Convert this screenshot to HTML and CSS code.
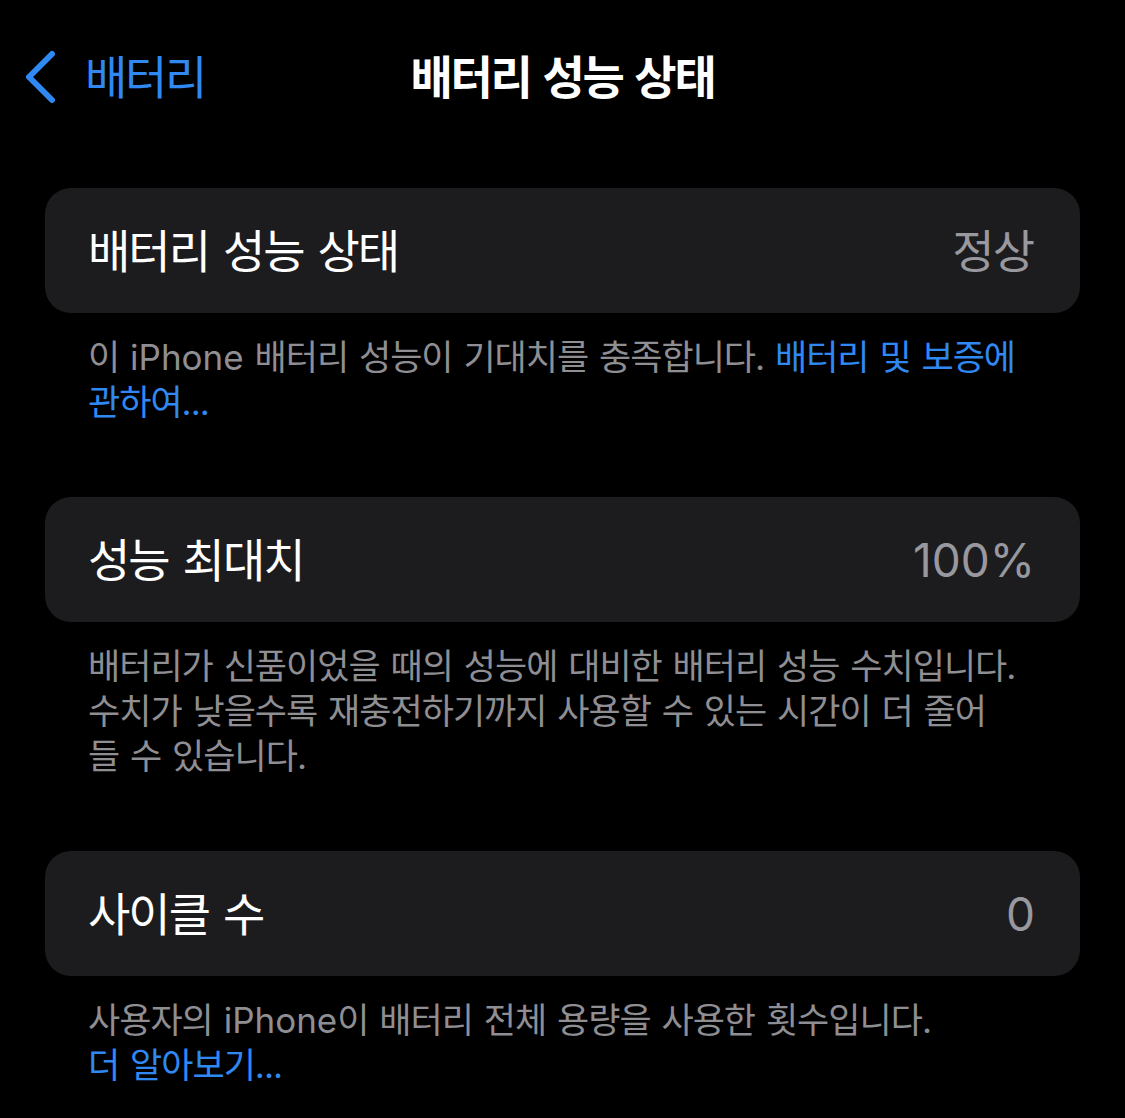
FILE: index.html
```html
<!DOCTYPE html>
<html lang="ko">
<head>
<meta charset="utf-8">
<title>배터리 성능 상태</title>
<link rel="stylesheet" href="styles.css">
</head>
<body>
<div class="screen">
  <header class="nav">
    <a class="back" href="#">
      <svg class="chevron" width="34" height="54" viewBox="0 0 34 54" aria-hidden="true">
        <polyline points="28,4 5,27 28,50" fill="none" stroke="currentColor" stroke-width="6" stroke-linecap="round" stroke-linejoin="round"/>
      </svg>
      <span class="back-label">배터리</span>
    </a>
    <h1 class="title">배터리 성능 상태</h1>
    <div class="spacer"></div>
  </header>

  <main class="content">
    <section class="group">
      <div class="card">
        <span class="label">배터리 성능 상태</span>
        <span class="value">정상</span>
      </div>
      <p class="footnote">이 <span class="en">iPhone</span> 배터리 성능이 기대치를 충족합니다. <a class="link" href="#">배터리 및 보증에<br>관하여...</a></p>
    </section>

    <section class="group">
      <div class="card">
        <span class="label">성능 최대치</span>
        <span class="value en">100%</span>
      </div>
      <p class="footnote">배터리가 신품이었을 때의 성능에 대비한 배터리 성능 수치입니다.<br>수치가 낮을수록 재충전하기까지 사용할 수 있는 시간이 더 줄어<br>들 수 있습니다.</p>
    </section>

    <section class="group">
      <div class="card">
        <span class="label">사이클 수</span>
        <span class="value en">0</span>
      </div>
      <p class="footnote">사용자의 <span class="en">iPhone</span>이 배터리 전체 용량을 사용한 횟수입니다.<br><a class="link" href="#">더 알아보기...</a></p>
    </section>
  </main>
</div>
</body>
</html>
```

FILE: styles.css
```css
* { box-sizing: border-box; }

html, body {
  margin: 0;
  padding: 0;
  background: #000;
}

body {
  font-family: "Inter", "Noto Sans CJK KR", sans-serif;
  color: #fff;
  -webkit-font-smoothing: antialiased;
}

.screen {
  width: 1125px;
  min-height: 1118px;
  background: #000;
  overflow: hidden;
}

.nav {
  display: grid;
  grid-template-columns: 1fr auto 1fr;
  align-items: center;
  height: 100px;
  margin-top: 27px;
  padding: 0 24px;
}

.back {
  display: flex;
  align-items: center;
  gap: 27px;
  color: #3088f2;
  text-decoration: none;
}

.chevron {
  display: block;
  flex: none;
}

.back-label {
  font-size: 46px;
  letter-spacing: -2.3px;
  line-height: 1;
}

.title {
  margin: 0;
  font-size: 46px;
  font-weight: 700;
  letter-spacing: -2.2px;
  word-spacing: 3px;
  line-height: 1;
}

.content {
  padding: 61px 45px 0;
  display: flex;
  flex-direction: column;
  gap: 72px;
}

.card {
  height: 125px;
  border-radius: 26px;
  background: #1c1c1e;
  padding: 0 45px 0 43px;
  display: flex;
  align-items: center;
  justify-content: space-between;
}

.label {
  font-size: 46px;
  letter-spacing: -2px;
  word-spacing: 3px;
  line-height: 1;
}

.value {
  font-size: 46px;
  letter-spacing: -2px;
  line-height: 1;
  color: #98989e;
  margin-right: 2px;
}

.value.en {
  letter-spacing: 0;
  margin-right: 0;
}

.footnote {
  margin: 0;
  padding: 22px 20px 0 43px;
  font-size: 35px;
  line-height: 45px;
  letter-spacing: -1px;
  word-spacing: 2px;
  color: #8e8e93;
  white-space: nowrap;
}

.en {
  letter-spacing: 0;
}

.link {
  color: #3088f2;
  text-decoration: none;
}
```
